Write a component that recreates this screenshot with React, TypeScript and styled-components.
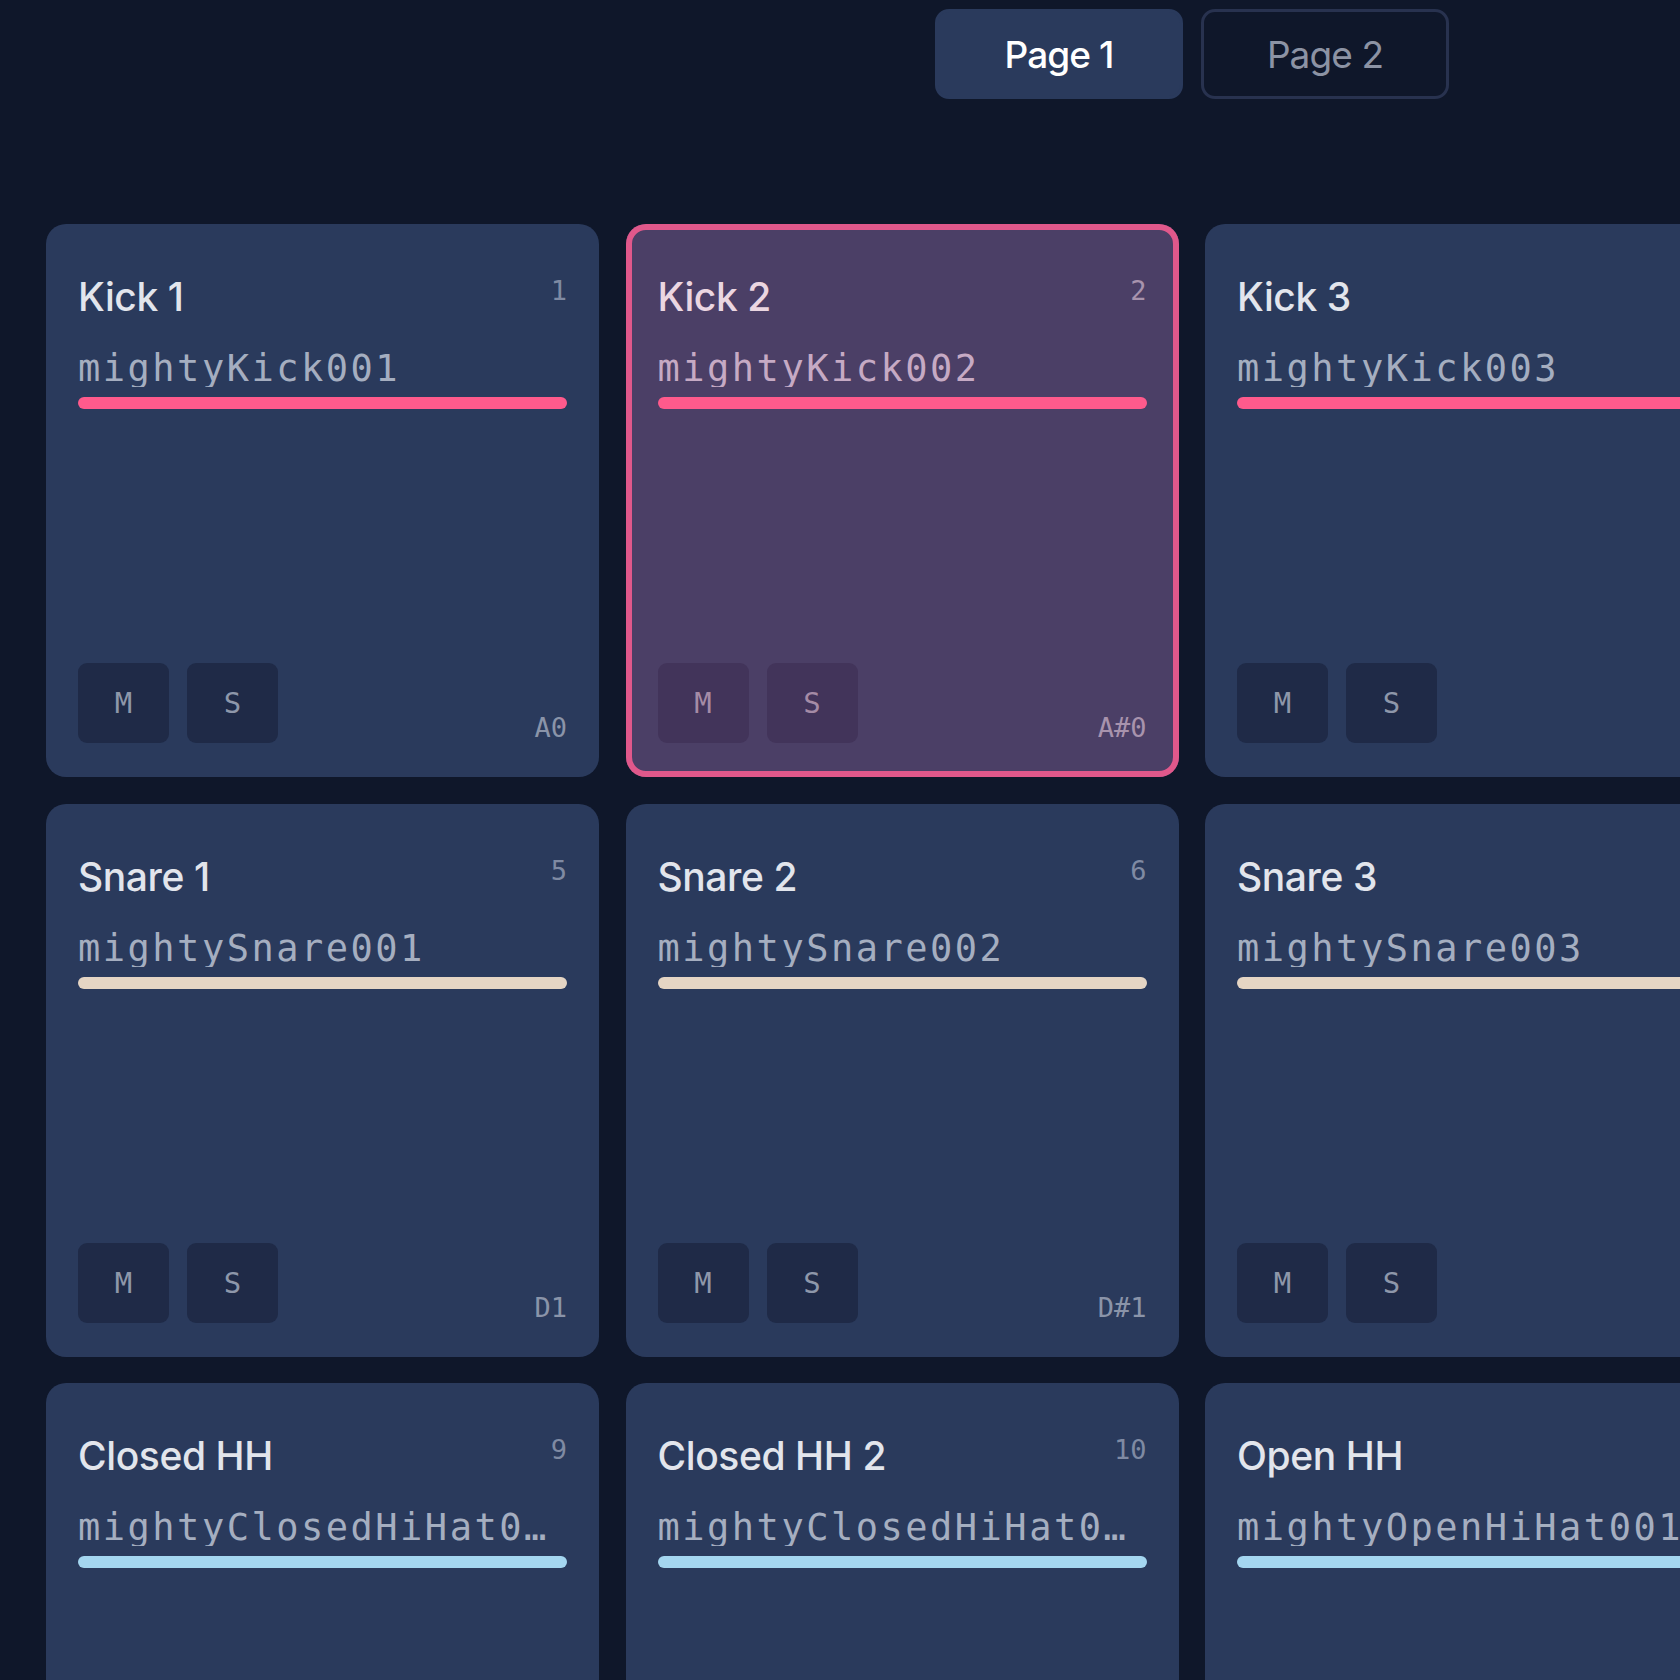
import React from "react";
import styled, { createGlobalStyle } from "styled-components";

const GlobalStyle = createGlobalStyle`
  html, body {
    margin: 0;
    padding: 0;
    background: #0f172a;
    overflow: hidden;
  }
`;

const Page = styled.div`
  width: 2384px;
  box-sizing: border-box;
  padding: 9px 46px;
  font-family: Inter, "Liberation Sans", Arial, sans-serif;
`;

const Tabs = styled.div`
  display: flex;
  justify-content: center;
  gap: 18px;
`;

const Tab = styled.button<{ $active?: boolean }>`
  width: 248px;
  height: 90px;
  box-sizing: border-box;
  border-radius: 14px;
  border: 3px solid ${(p) => (p.$active ? "#2a3a5c" : "#28324f")};
  background: ${(p) => (p.$active ? "#2a3a5c" : "transparent")};
  color: ${(p) => (p.$active ? "#ffffff" : "#8c93a4")};
  font-family: Inter, "Liberation Sans", Arial, sans-serif;
  font-weight: ${(p) => (p.$active ? 500 : 400)};
  font-size: 37px;
  letter-spacing: -0.9px;
  cursor: pointer;
`;

const Grid = styled.div`
  margin-top: 125px;
  display: grid;
  grid-template-columns: repeat(4, 553px);
  gap: 26.5px;
`;

const Card = styled.div<{ $selected?: boolean }>`
  height: 553px;
  box-sizing: border-box;
  padding: 53px 32px 34px 32px;
  border-radius: 20px;
  display: flex;
  flex-direction: column;
  background: ${(p) => (p.$selected ? "#4b3f66" : "#2a3a5c")};
  box-shadow: ${(p) => (p.$selected ? "inset 0 0 0 6px #e0588b" : "none")};
`;

const Header = styled.div`
  display: flex;
  justify-content: space-between;
  align-items: flex-start;
`;

const Title = styled.div<{ $selected?: boolean }>`
  font-size: 39px;
  font-weight: 500;
  line-height: 39px;
  letter-spacing: -0.4px;
  color: ${(p) => (p.$selected ? "#ebd6e1" : "#e2e5ec")};
`;

const Mono = styled.div`
  font-family: "DejaVu Sans Mono", "Liberation Mono", monospace;
`;

const PadNumber = styled(Mono)<{ $selected?: boolean }>`
  font-size: 27px;
  line-height: 27px;
  color: ${(p) => (p.$selected ? "#a893ad" : "#7f8aa3")};
`;

const SampleName = styled(Mono)<{ $selected?: boolean }>`
  margin-top: 34px;
  font-size: 37px;
  line-height: 37px;
  letter-spacing: 2.5px;
  white-space: nowrap;
  overflow: hidden;
  text-overflow: ellipsis;
  color: ${(p) => (p.$selected ? "#c6aac4" : "#a5aec0")};
`;

const Bar = styled.div<{ $color: string }>`
  margin-top: 10px;
  height: 12px;
  border-radius: 6px;
  background: ${(p) => p.$color};
`;

const Footer = styled.div`
  margin-top: auto;
  display: flex;
  justify-content: space-between;
  align-items: flex-end;
`;

const Toggles = styled.div`
  display: flex;
  gap: 18px;
`;

const Toggle = styled.button<{ $selected?: boolean }>`
  width: 91px;
  height: 80px;
  border: none;
  border-radius: 9px;
  padding: 0;
  font-family: "DejaVu Sans Mono", "Liberation Mono", monospace;
  font-size: 29px;
  background: ${(p) => (p.$selected ? "#42345a" : "#1f2a47")};
  color: ${(p) => (p.$selected ? "#a58ba6" : "#8e97aa")};
  cursor: pointer;
`;

const Note = styled(Mono)<{ $selected?: boolean }>`
  font-size: 27px;
  line-height: 27px;
  margin-bottom: 2px;
  color: ${(p) => (p.$selected ? "#a893ad" : "#8a94a9")};
`;

type Pad = {
  num: number;
  title: string;
  sample: string;
  note: string;
  color: string;
};

const KICK = "#ff5a8c";
const SNARE = "#e5d5c4";
const HAT = "#a4d6f0";
const PERC = "#b9a4f0";

const pads: Pad[] = [
  { num: 1, title: "Kick 1", sample: "mightyKick001", note: "A0", color: KICK },
  { num: 2, title: "Kick 2", sample: "mightyKick002", note: "A#0", color: KICK },
  { num: 3, title: "Kick 3", sample: "mightyKick003", note: "B0", color: KICK },
  { num: 4, title: "Kick 4", sample: "mightyKick004", note: "C1", color: KICK },
  { num: 5, title: "Snare 1", sample: "mightySnare001", note: "D1", color: SNARE },
  { num: 6, title: "Snare 2", sample: "mightySnare002", note: "D#1", color: SNARE },
  { num: 7, title: "Snare 3", sample: "mightySnare003", note: "E1", color: SNARE },
  { num: 8, title: "Clap", sample: "mightyClap001", note: "F1", color: SNARE },
  { num: 9, title: "Closed HH", sample: "mightyClosedHiHat001", note: "F#1", color: HAT },
  { num: 10, title: "Closed HH 2", sample: "mightyClosedHiHat002", note: "G1", color: HAT },
  { num: 11, title: "Open HH", sample: "mightyOpenHiHat001", note: "G#1", color: HAT },
  { num: 12, title: "Ride", sample: "mightyRide001", note: "A1", color: HAT },
  { num: 13, title: "Tom 1", sample: "mightyTom001", note: "A#1", color: PERC },
  { num: 14, title: "Tom 2", sample: "mightyTom002", note: "B1", color: PERC },
  { num: 15, title: "Crash", sample: "mightyCrash001", note: "C2", color: PERC },
  { num: 16, title: "Perc", sample: "mightyPerc001", note: "C#2", color: PERC },
];

function PadCard({ pad, selected }: { pad: Pad; selected: boolean }) {
  return (
    <Card $selected={selected}>
      <Header>
        <Title $selected={selected}>{pad.title}</Title>
        <PadNumber $selected={selected}>{pad.num}</PadNumber>
      </Header>
      <SampleName $selected={selected}>{pad.sample}</SampleName>
      <Bar $color={pad.color} />
      <Footer>
        <Toggles>
          <Toggle $selected={selected}>M</Toggle>
          <Toggle $selected={selected}>S</Toggle>
        </Toggles>
        <Note $selected={selected}>{pad.note}</Note>
      </Footer>
    </Card>
  );
}

export default function App() {
  const selected = 2;
  return (
    <Page>
      <GlobalStyle />
      <Tabs>
        <Tab $active>Page 1</Tab>
        <Tab>Page 2</Tab>
      </Tabs>
      <Grid>
        {pads.map((pad) => (
          <PadCard key={pad.num} pad={pad} selected={pad.num === selected} />
        ))}
      </Grid>
    </Page>
  );
}
